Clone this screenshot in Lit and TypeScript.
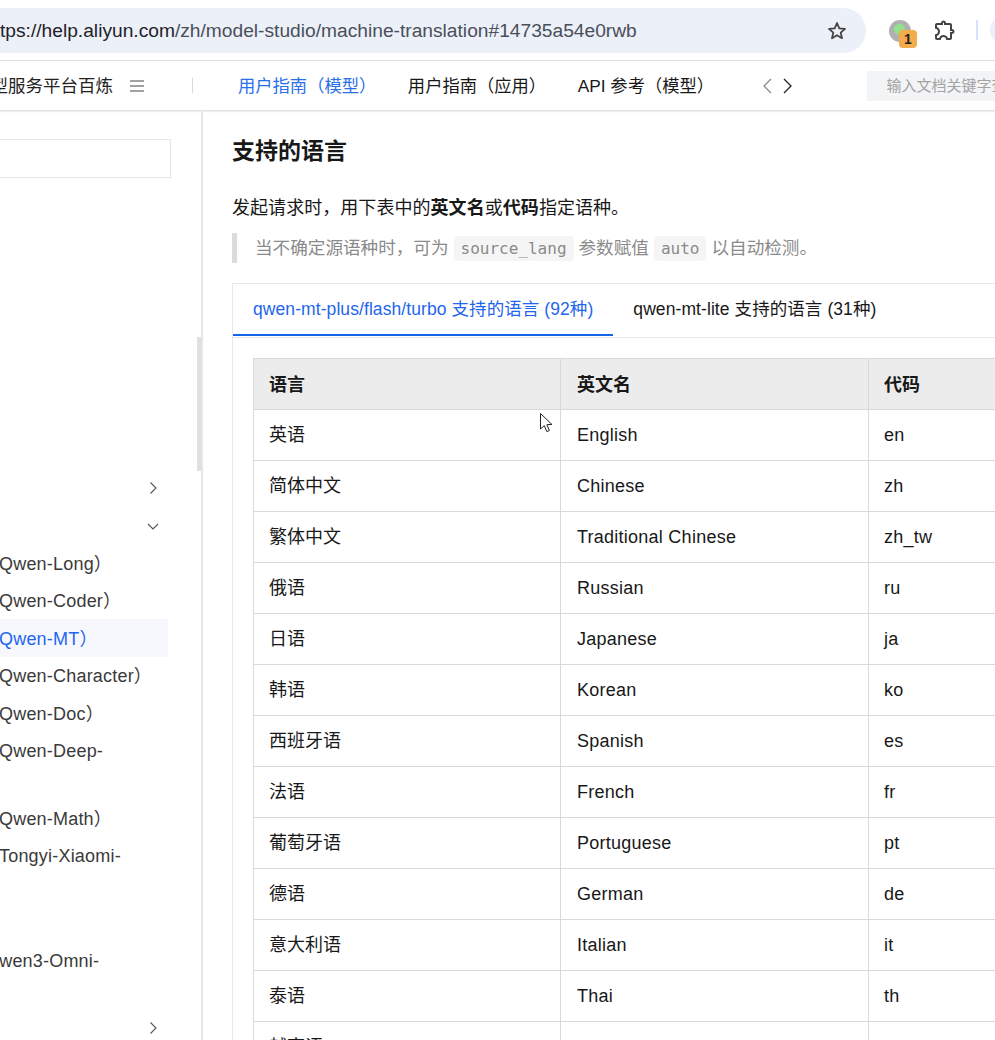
import { LitElement, html, css, svg } from "lit";
import { customElement } from "lit/decorators.js";

const languages = [
  ["英语", "English", "en"],
  ["简体中文", "Chinese", "zh"],
  ["繁体中文", "Traditional Chinese", "zh_tw"],
  ["俄语", "Russian", "ru"],
  ["日语", "Japanese", "ja"],
  ["韩语", "Korean", "ko"],
  ["西班牙语", "Spanish", "es"],
  ["法语", "French", "fr"],
  ["葡萄牙语", "Portuguese", "pt"],
  ["德语", "German", "de"],
  ["意大利语", "Italian", "it"],
  ["泰语", "Thai", "th"],
  ["越南语", "Vietnamese", "vi"],
];

// the sidebar is scrolled sideways, so most of its labels are cut off on the left
const sideRows = [
  { text: "", chevron: "right" },
  { text: "", chevron: "down" },
  { text: "Qwen-Long）" },
  { text: "Qwen-Coder）" },
  { text: "Qwen-MT）", active: true },
  { text: "Qwen-Character）" },
  { text: "Qwen-Doc）" },
  { text: "Qwen-Deep-", tall: true },
  { text: "Qwen-Math）" },
  { text: "Tongyi-Xiaomi-", tall: true },
  { text: "" },
  { text: "Qwen3-Omni-", tall: true, cut: true },
  { text: "", chevron: "right" },
];

const chevron = (dir: string) => {
  const d = dir === "down" ? "M1 1l5 5 5-5" : "M3.5 0.5l5.5 5.5-5.5 5.5";
  return svg`<svg class="chev ${dir}" width="12" height="12" viewBox="0 0 12 12"><path d=${d} fill="none" stroke="#555" stroke-width="1.1"/></svg>`;
};

@customElement("app-root")
export class AppRoot extends LitElement {
  static styles = css`
    :host {
      display: block;
      width: 995px;
      height: 1040px;
      overflow: hidden;
      background: #fff;
      font-family: "Liberation Sans", "Noto Sans CJK SC", sans-serif;
      color: #181818;
      position: relative;
    }
    .chrome {
      height: 60px;
      display: flex;
      align-items: flex-start;
      border-bottom: 1px solid #dedede;
    }
    .pill {
      margin: 8px 0 0 -16px;
      width: 882px;
      height: 45px;
      flex: none;
      background: #ecf0f9;
      border-radius: 0 23px 23px 0;
      display: flex;
      align-items: center;
      justify-content: space-between;
      padding-right: 19px;
      box-sizing: border-box;
      font-size: 19.2px;
      color: #4a4f59;
      white-space: nowrap;
    }
    .pill b { font-weight: 400; color: #1f2227; }
    .ext {
      position: relative;
      margin: 20px 0 0 23px;
      width: 22px;
      height: 22px;
      flex: none;
      border-radius: 50%;
      background: radial-gradient(circle at 47% 42%, #94e08e 0 5px, #b0b0b0 6px);
    }
    .ext span {
      position: absolute;
      left: 10px;
      top: 10px;
      width: 18px;
      height: 18px;
      border-radius: 4px;
      background: #f4ab4a;
      font-size: 14px;
      font-weight: 700;
      text-align: center;
      line-height: 19px;
      color: #222;
    }
    .puzzle { margin: 18px 0 0 22px; flex: none; }
    .divider {
      margin: 20px 0 0 19px;
      width: 2px;
      height: 20px;
      background: #d3e3fd;
      flex: none;
    }
    .avatar {
      margin: 15px 0 0 12px;
      width: 30px;
      height: 30px;
      border-radius: 50%;
      background: #ecf0f9;
      flex: none;
    }

    .nav {
      height: 49px;
      display: flex;
      align-items: center;
      border-bottom: 1px solid #e3e3e3;
      box-shadow: 0 1px 1px #eeeeee;
      font-size: 17.3px;
      white-space: nowrap;
      position: relative;
    }
    .brand {
      width: 113px;
      flex: none;
      display: flex;
      justify-content: flex-end;
      overflow: hidden;
      color: #222;
      padding-bottom: 2px;
      font-size: 17.5px;
    }
    .burger { margin-left: 17px; flex: none; }
    .sep {
      margin-left: 48px;
      width: 1px;
      height: 15px;
      background: #d9d9d9;
      flex: none;
    }
    .nav a { flex: none; color: #181818; padding-bottom: 2px; }
    .nav a.on { color: #2a6fe8; margin-left: 45px; }
    .nav a.two { margin-left: 31.6px; }
    .nav a.three { margin-left: 31.6px; }
    .arrows { margin-left: 48.4px; display: flex; gap: 9px; flex: none; }
    .find {
      margin-left: 74px;
      width: 160px;
      height: 30px;
      flex: none;
      background: #f3f4f6;
      color: #a3a3a3;
      font-size: 15px;
      line-height: 30px;
      padding-left: 19px;
      box-sizing: border-box;
    }

    .main { display: flex; align-items: flex-start; }
    aside {
      width: 201px;
      height: 930px;
      flex: none;
      border-right: 2px solid #e6e6e6;
      position: relative;
      overflow: hidden;
    }
    .thumb {
      position: absolute;
      right: 0;
      top: 226px;
      width: 4px;
      height: 134px;
      background: #dfdfdf;
    }
    .search {
      margin: 28px 0 0 -10px;
      width: 181px;
      height: 39px;
      box-sizing: border-box;
      border: 1px solid #e7e7e7;
    }
    .rows { margin-top: 291px; width: 168px; }
    .row {
      height: 37.5px;
      line-height: 32px;
      padding: 3.75px 9px 3.75px 0;
      box-sizing: border-box;
      display: flex;
      justify-content: space-between;
      align-items: flex-start;
      font-size: 18px;
      letter-spacing: 0.2px;
      color: #3a3a3a;
      white-space: nowrap;
    }
    .row span { margin-left: -1px; }
    .row.tall { height: 67.5px; }
    .row.cut span { margin-left: -15px; }
    .row.on { background: #f6f8fd; color: #1f66ee; }
    .chev { margin: 9px 0 0 0; }
    .chev.down { margin-top: 13px; }

    .doc { padding: 25px 0 0 29px; flex: none; width: 900px; }
    h2 {
      margin: 0;
      font-size: 23px;
      line-height: 30px;
      font-weight: 700;
      color: #181818;
    }
    p {
      margin: 27px 0 0;
      font-size: 18px;
      letter-spacing: 0.05px;
      line-height: 30px;
      color: #181818;
    }
    p strong { font-weight: 700; }
    blockquote {
      margin: 10px 0 0;
      height: 30px;
      border-left: 5px solid #dcdcdc;
      padding-left: 18px;
      font-size: 17.6px;
      line-height: 30px;
      color: #8a8a8a;
      display: flex;
      align-items: center;
      white-space: pre;
    }
    code {
      background: #f5f5f5;
      border-radius: 4px;
      font-family: "DejaVu Sans Mono", monospace;
      font-size: 16px;
      line-height: 25px;
      padding: 0 7px;
      margin: 0 5px;
      color: #8a8a8a;
    }
    .card {
      margin-top: 20px;
      border: 1px solid #e8e8e8;
      border-right: none;
    }
    .tabs {
      display: flex;
      height: 53px;
      border-bottom: 1px solid #e8e8e8;
      box-sizing: content-box;
      font-size: 17.5px;
      letter-spacing: 0.08px;
      white-space: nowrap;
    }
    .tab {
      padding: 0 20px;
      height: 52px;
      line-height: 50px;
      box-sizing: border-box;
    }
    .tab.on {
      color: #1f66ee;
      border-bottom: 2px solid #1366ec;
    }
    .panel { padding: 20px; }
    table {
      border-collapse: collapse;
      table-layout: fixed;
      width: 923px;
      font-size: 18px;
    }
    th, td {
      border: 1px solid #d9d9d9;
      height: 51px;
      box-sizing: border-box;
      padding: 0 15px;
      text-align: left;
      line-height: 30px;
    }
    th:nth-child(2), td:nth-child(2) { padding-left: 16px; }
    td:not(:first-child) { letter-spacing: 0.25px; }
    th { background: #ececec; font-weight: 700; padding-top: 1px; }
    .cursor { position: absolute; left: 540px; top: 413px; }
  `;

  render() {
    return html`
      <div class="chrome">
        <div class="pill">
          <span><b>https://help.aliyun.com</b>/zh/model-studio/machine-translation#14735a54e0rwb</span>
          <svg width="20" height="20" viewBox="0 0 20 20"><path d="M10 2l2.3 5.3 5.7.5-4.3 3.8 1.3 5.6-5-3-5 3 1.3-5.6L2 7.800l5.700-.5z" fill="none" stroke="#444" stroke-width="1.8" stroke-linejoin="round"/></svg>
        </div>
        <div class="ext"><span>1</span></div>
        <svg class="puzzle" width="24" height="24" viewBox="0 0 24 24"><path fill="#444" d="M10.500 4.500c.28 0 .5.22.5.5v2h6v6h2c.28 0 .5.22.5.5s-.22.5-.5.5h-2v6h-2.120c-.68-1.750-2.390-3-4.380-3s-3.700 1.250-4.380 3H4v-2.120c1.750-.68 3-2.390 3-4.380 0-1.990-1.240-3.700-2.990-4.380L4 7h6V5c0-.28.22-.5.5-.5zm0-2C9.120 2.500 8 3.620 8 5H4c-1.100 0-1.990.9-1.990 2v3.800h.29c1.490 0 2.700 1.210 2.700 2.700s-1.210 2.700-2.700 2.700H2V20c0 1.100.9 2 2 2h3.800v-.3c0-1.490 1.210-2.700 2.700-2.700s2.700 1.210 2.700 2.700v.3H17c1.100 0 2-.9 2-2v-4c1.380 0 2.500-1.120 2.500-2.500S20.380 11 19 11V7c0-1.100-.9-2-2-2h-4c0-1.380-1.120-2.500-2.500-2.500z"/></svg>
        <div class="divider"></div>
        <div class="avatar"></div>
      </div>

      <div class="nav">
        <div class="brand"><span>模型服务平台百炼</span></div>
        <svg class="burger" width="14" height="12" viewBox="0 0 14 12"><path d="M0 1h14M0 6h14M0 11h14" stroke="#444" stroke-width="1.200"/></svg>
        <div class="sep"></div>
        <a class="on">用户指南（模型）</a>
        <a class="two">用户指南（应用）</a>
        <a class="three">API 参考（模型）</a>
        <div class="arrows">
          <svg width="11" height="16" viewBox="0 0 11 16"><path d="M9 1L2 8l7 7" fill="none" stroke="#8a8a8a" stroke-width="1.300"/></svg>
          <svg width="11" height="16" viewBox="0 0 11 16"><path d="M2 1l7 7-7 7" fill="none" stroke="#222" stroke-width="1.300"/></svg>
        </div>
        <div class="find">输入文档关键字查找</div>
      </div>

      <div class="main">
        <aside>
          <div class="thumb"></div>
          <div class="search"></div>
          <div class="rows">
            ${sideRows.map(
              (r) => html`<div class="row ${r.tall ? "tall" : ""} ${r.active ? "on" : ""} ${r.cut ? "cut" : ""}">
                <span>${r.text}</span>${r.chevron ? chevron(r.chevron) : ""}
              </div>`
            )}
          </div>
        </aside>
        <div class="doc">
          <h2>支持的语言</h2>
          <p>发起请求时，用下表中的<strong>英文名</strong>或<strong>代码</strong>指定语种。</p>
          <blockquote>当不确定源语种时，可为<code>source_lang</code>参数赋值<code>auto</code>以自动检测。</blockquote>
          <div class="card">
            <div class="tabs">
              <div class="tab on">qwen-mt-plus/flash/turbo 支持的语言 (92种)</div>
              <div class="tab">qwen-mt-lite 支持的语言 (31种)</div>
            </div>
            <div class="panel">
              <table>
                <colgroup><col style="width:307px" /><col style="width:308px" /><col style="width:308px" /></colgroup>
                <thead><tr><th>语言</th><th>英文名</th><th>代码</th></tr></thead>
                <tbody>
                  ${languages.map((l) => html`<tr><td>${l[0]}</td><td>${l[1]}</td><td>${l[2]}</td></tr>`)}
                </tbody>
              </table>
            </div>
          </div>
        </div>
      </div>

      <svg class="cursor" width="14" height="21" viewBox="0 0 14 21"><path d="M.5.5v15.500l3.800-3.400 2.500 6 2.600-1.100-2.500-5.800 5-.3z" fill="#fff" stroke="#222" stroke-width="1"/></svg>
    `;
  }
}
